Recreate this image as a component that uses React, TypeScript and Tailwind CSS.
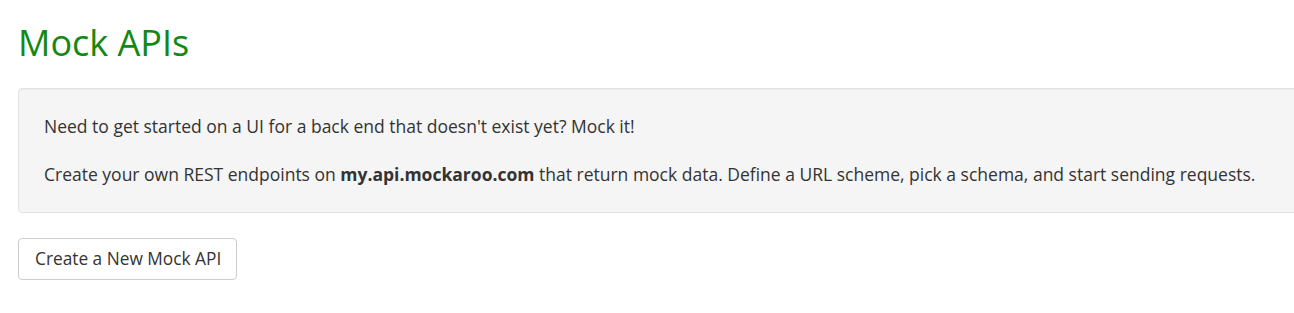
export default function App() {
  return (
    <div className="min-h-[313px] bg-white pl-[18px] pt-[20px] overflow-hidden" style={{ fontFamily: '"Open Sans", sans-serif' }}>
      <h1 className="text-[36px] leading-[46px] font-normal text-[#138813] m-0">Mock APIs</h1>
      <div className="mt-[22px] w-[1300px] rounded-[4px] border border-[#e3e3e3] bg-[#f5f5f5] shadow-[inset_0_1px_1px_rgba(0,0,0,0.05)] pl-[25px] pt-[25px] pb-[25px] text-[17.5px] leading-[25px] text-[#333]">
        <p className="m-0">Need to get started on a UI for a back end that doesn't exist yet? Mock it!</p>
        <p className="m-0 mt-[23px]">
          Create your own REST endpoints on <b className="font-bold">my.api.mockaroo.com</b> that return mock data. Define a URL scheme, pick a schema, and start sending requests.
        </p>
      </div>
      <button className="mt-[25px] h-[42px] pl-[16px] pr-[15px] rounded-[4px] border border-[#ccc] bg-white text-[17.3px] text-[#333]">
        Create a New Mock API
      </button>
    </div>
  );
}
